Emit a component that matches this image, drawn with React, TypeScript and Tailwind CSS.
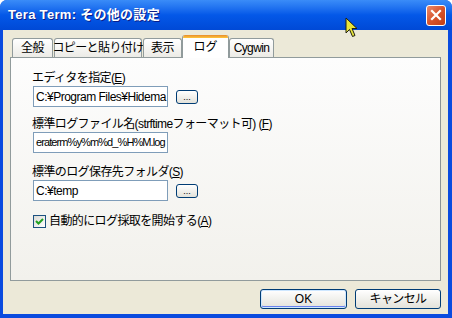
import React from 'react';

const ui = "font-['Liberation_Sans','Noto_Sans_CJK_JP',sans-serif]";

const tabs = [
  { label: '全般', w: 'w-[41px] ml-[2px]' },
  { label: 'コピーと貼り付け', w: 'w-[88px] ml-[1px]' },
  { label: '表示', w: 'w-[39px] ml-[1px]' },
  { label: 'ログ', w: 'w-[47px]', active: true },
  { label: 'Cygwin', w: 'w-[45px]' },
];

function Field({ value, className = 'text-[12px] tracking-[-0.5px]' }: { value: string; className?: string }) {
  return (
    <div className={`w-[135px] h-[21px] border border-[#7F9DB9] bg-white px-[2px] flex items-center overflow-hidden whitespace-nowrap text-black ${className}`}>
      {value}
    </div>
  );
}

function Browse() {
  return (
    <button className="ml-[8px] w-[22px] h-[14px] rounded-[3px] border border-[#003C74] bg-gradient-to-b from-white to-[#E3E2DA] flex items-end justify-center pb-[1px] text-[9px] leading-none text-black">
      ...
    </button>
  );
}

function Label({ children, className = '' }: { children: React.ReactNode; className?: string }) {
  return (
    <div className={`h-[14px] leading-[14px] text-[12px] text-black tracking-[-0.6px] whitespace-nowrap ${className}`}>
      {children}
    </div>
  );
}

export default function App() {
  return (
    <div className={`w-[452px] h-[318px] flex flex-col bg-[#0A4BDF] rounded-t-[7px] overflow-hidden relative ${ui}`}>
      <div className="h-[30px] flex items-center pl-[8px] pr-[6px] bg-gradient-to-b from-[#3A8CF8] via-[#0458E8] to-[#0049D6]">
        <span className="text-white font-bold text-[13px] tracking-[0.3px] [text-shadow:1px_1px_0_#0A1E8A]">
          Tera Term: その他の設定
        </span>
        <div className="ml-auto w-[20px] h-[21px] rounded-[3px] border border-white bg-gradient-to-br from-[#E8896A] via-[#D8542C] to-[#C33E14] flex items-center justify-center">
          <svg width="12" height="12" viewBox="0 0 12 12">
            <path d="M2 2 L10 10 M10 2 L2 10" stroke="white" strokeWidth="2.2" strokeLinecap="square" />
          </svg>
        </div>
      </div>

      <div className="flex-1 ml-[3px] mr-[4px] mb-[4px] bg-[#ECE9D8] px-[7px] pt-[4px] flex flex-col">
        <div className="flex items-end h-[23px]">
          {tabs.map((t) =>
            t.active ? (
              <div
                key={t.label}
                className={`${t.w} h-[23px] -mb-px relative z-10 bg-white border-x border-[#919B9C] rounded-t-[3px] overflow-hidden flex justify-center pt-[3px] text-[12px] text-black`}
              >
                <div className="absolute top-0 left-0 right-0 h-[3px] bg-gradient-to-b from-[#E68B2C] to-[#FFC73C]" />
                {t.label}
              </div>
            ) : (
              <div
                key={t.label}
                className={`${t.w} h-[19px] border border-b-0 border-[#919B9C] rounded-t-[3px] bg-gradient-to-b from-white to-[#ECEBE6] flex items-center justify-center whitespace-nowrap tracking-[-0.6px] text-[12px] text-black`}
              >
                {t.label}
              </div>
            )
          )}
        </div>

        <div className="h-[224px] border border-[#919B9C] border-r-[#8C9294] bg-gradient-to-b from-[#FDFDFD] to-[#F2F1EC] pl-[22px] pt-[13px]">
          <Label className="-ml-px">エディタを指定(<u>E</u>)</Label>
          <div className="mt-[1px] flex items-center">
            <Field value="C:¥Program Files¥Hidema" />
            <Browse />
          </div>

          <Label className="mt-[10px] -ml-px">標準ログファイル名(strftimeフォーマット可) (<u>F</u>)</Label>
          <div className="mt-[1px] flex items-center">
            <Field value="eraterm%y%m%d_%H%M.log" className="text-[11px] tracking-[-0.9px]" />
          </div>

          <Label className="mt-[12px] -ml-px">標準のログ保存先フォルダ(<u>S</u>)</Label>
          <div className="mt-[1px] flex items-center">
            <Field value="C:¥temp" />
            <Browse />
          </div>

          <div className="mt-[11px] flex items-center">
            <div className="w-[13px] h-[13px] border border-[#1C5180] bg-gradient-to-br from-[#DCDBD5] to-white flex items-center justify-center">
              <svg width="9" height="9" viewBox="0 0 9 9">
                <path d="M1 4 L3.5 6.5 L8 2" stroke="#21A121" strokeWidth="2" fill="none" />
              </svg>
            </div>
            <span className="ml-[3px] text-[12px] text-black tracking-[-0.6px]">
              自動的にログ採取を開始する(<u>A</u>)
            </span>
          </div>
        </div>

        <div className="mt-[8px] flex justify-end gap-[8px]">
          <button className="w-[87px] h-[20px] rounded-[3px] border border-[#003C74] bg-gradient-to-b from-white to-[#E3E2DA] shadow-[inset_0_0_0_1px_#CEE7FF,inset_0_-1px_0_1px_#6982EE] text-[12px] text-black">
            OK
          </button>
          <button className="w-[86px] h-[20px] rounded-[3px] border border-[#003C74] bg-gradient-to-b from-white to-[#E3E2DA] text-[12px] tracking-[-0.6px] text-black">
            キャンセル
          </button>
        </div>
      </div>

      <svg className="absolute left-[345px] top-[17px]" width="14" height="22" viewBox="0 0 14 22">
        <path d="M1 1 L1 16 L4.5 12.5 L7.5 19.5 L10 18.5 L7 11.5 L12 11.5 Z" fill="#E8E43A" stroke="#202010" strokeWidth="1" strokeLinejoin="round" />
      </svg>
    </div>
  );
}
